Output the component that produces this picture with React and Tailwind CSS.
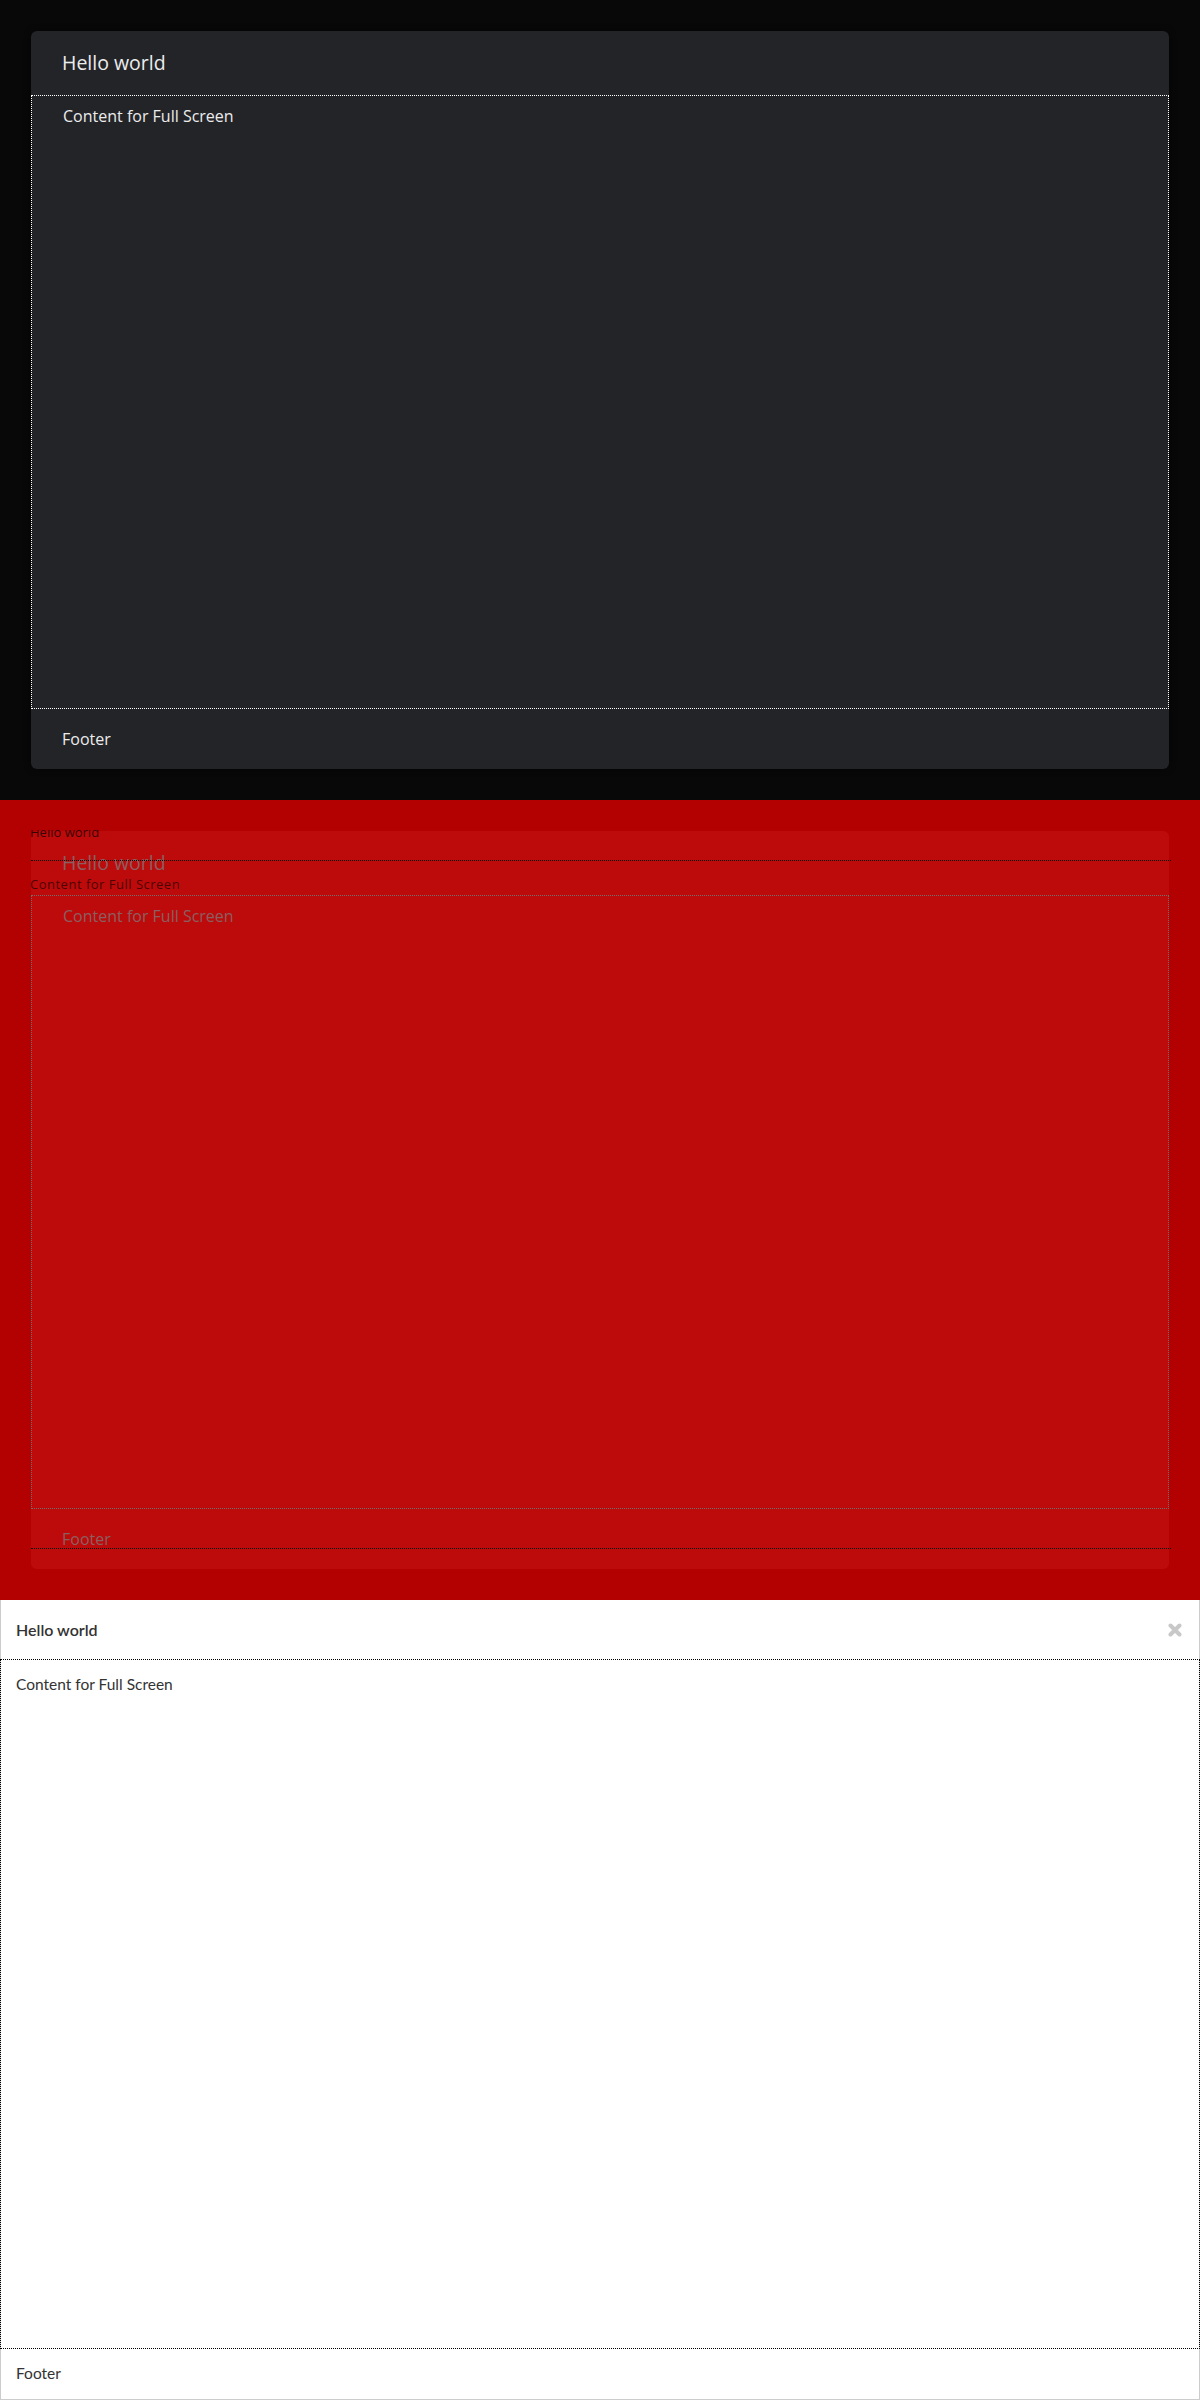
import React from "react";

const Panel = ({ tone }) => {
  const red = tone === "red";
  const textTone = red ? "text-[#7f7474] opacity-80" : "text-[#ececec]";
  return (
    <div
      className={`flex h-[738px] flex-col rounded-md ${
        red ? "bg-[#bd0b0c]" : "bg-[#232428] shadow-[0_0_6px_rgba(0,0,0,0.6)]"
      }`}
    >
      {/* Header */}
      <div className="relative flex h-[64px] shrink-0 items-center px-[31px]">
        <span className={`text-[19.5px] ${textTone}`}>Hello world</span>
        {red && (
          <div className="absolute left-0 right-[-2px] top-[29px] border-t border-dotted border-black" />
        )}
      </div>

      {/* Content */}
      <div
        className={`relative flex-1 border border-dotted px-[31px] pt-[8px] ${
          red ? "border-[#6e6e6e]" : "border-white"
        }`}
      >
        <span className={`text-[16px] ${textTone}`}>Content for Full Screen</span>
      </div>

      {/* Footer */}
      <div className="relative flex h-[60px] shrink-0 items-center px-[31px]">
        <span className={`text-[16px] ${textTone}`}>Footer</span>
        {red && (
          <div className="absolute left-0 right-[-2px] top-[39px] border-t border-dotted border-black" />
        )}
      </div>
    </div>
  );
};

export default function App() {
  return (
    <div className="w-[1200px] font-['Open_Sans',sans-serif]">
      {/* Dark theme */}
      <div className="h-[800px] bg-[#080808] p-[31px]">
        <Panel tone="dark" />
      </div>

      {/* Red overlay */}
      <div className="relative h-[800px] bg-[#b30000] p-[31px]">
        <div className="absolute left-[30px] top-[30px] z-10 h-[7px] overflow-hidden text-[13px] leading-[13px] text-black opacity-70">
          <div className="-mt-[4px]">Hello world</div>
        </div>
        <div className="absolute left-[30px] top-[77px] z-10 text-[13px] leading-[14px] tracking-[0.5px] text-black opacity-60">
          Content for Full Screen
        </div>
        <Panel tone="red" />
      </div>

      {/* Light modal */}
      <div className="flex h-[800px] flex-col border-x border-b border-[#cccccc] bg-white font-['Lato',sans-serif] text-[#333333]">
        <div className="flex h-[59px] shrink-0 items-center justify-between pl-[15px] pr-[17px]">
          <span className="text-[16px] font-semibold">Hello world</span>
          <svg width="14" height="14" viewBox="0 0 14 14" className="text-[#c8c8c8]">
            <path
              d="M2.5 2.5 L11.5 11.5 M11.5 2.5 L2.5 11.5"
              stroke="currentColor"
              strokeWidth="4"
              strokeLinecap="round"
            />
          </svg>
        </div>
        <div className="-mx-px flex-1 border border-dotted border-black px-[15px] pt-[12px]">
          <span className="text-[15.5px]">Content for Full Screen</span>
        </div>
        <div className="flex h-[50px] shrink-0 items-center pl-[15px]">
          <span className="text-[15.5px]">Footer</span>
        </div>
      </div>
    </div>
  );
}
